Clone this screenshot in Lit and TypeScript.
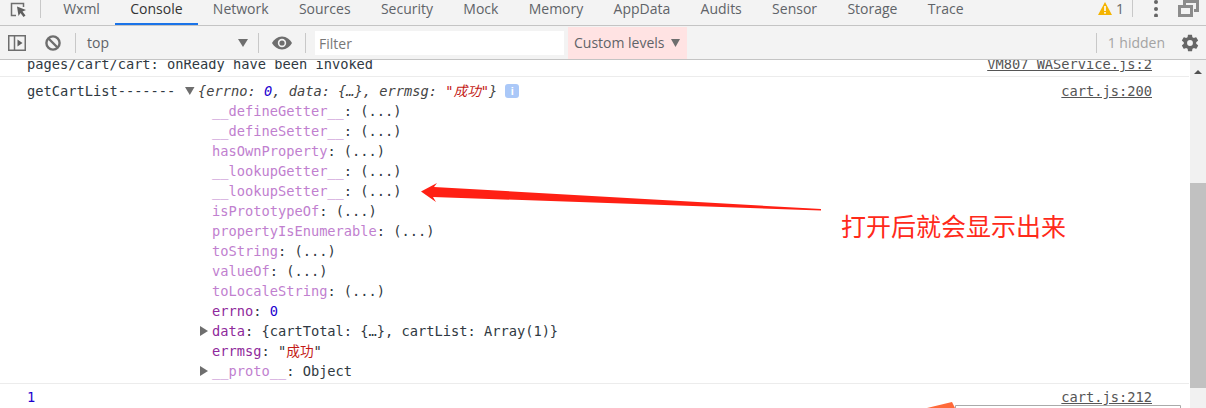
import { LitElement, html, css, svg } from "lit";
import { customElement } from "lit/decorators.js";

const TABS = ["Wxml", "Console", "Network", "Sources", "Security", "Mock", "Memory", "AppData", "Audits", "Sensor", "Storage", "Trace"];
const DIM = [
  ["__defineGetter__", "(...)"],
  ["__defineSetter__", "(...)"],
  ["hasOwnProperty", "(...)"],
  ["__lookupGetter__", "(...)"],
  ["__lookupSetter__", "(...)"],
  ["isPrototypeOf", "(...)"],
  ["propertyIsEnumerable", "(...)"],
  ["toString", "(...)"],
  ["valueOf", "(...)"],
  ["toLocaleString", "(...)"],
];

@customElement("app-root")
export class AppRoot extends LitElement {
  static styles = css`
    :host { display: block; position: relative; width: 1206px; height: 408px; overflow: hidden; background: #fff; font-family: "Open Sans", "Noto Sans", sans-serif; color: #5a5a5a; }
    svg { display: block; flex: none; }
    .bar { display: flex; align-items: center; background: #f3f3f3; box-sizing: border-box; }
    .tabs { height: 26px; border-bottom: 1px solid #c4c4c4; padding-left: 10px; }
    .sep { width: 1px; background: #c8c8c8; flex: none; }
    .tabs .sep.top { align-self: flex-start; margin: 0 7px 0 13px; height: 18px; }
    .tab { height: 25px; line-height: 17px; padding: 0 15.16px; font-size: 14px; color: #5f6368; box-sizing: border-box; white-space: nowrap; }
    .tab.on { color: #333; border-bottom: 2px solid #1a73e8; }
    .spacer { flex: 1; }
    .warn-n { font-size: 14px; line-height: 17px; align-self: flex-start; margin: 0 0 0 4px; color: #666; }
    .tools { height: 34px; border-bottom: 1px solid #c4c4c4; padding-left: 8px; }
    .tools .sep { height: 20px; }
    .ctx { width: 161px; margin-left: 11px; margin-right: 10px; display: flex; align-items: center; font-size: 14px; color: #5f6368; justify-content: space-between; }
    .filter { width: 249px; height: 24px; background: #fff; box-sizing: border-box; padding-left: 4px; font-size: 14px; line-height: 25px; color: #777; margin: 0 4px 0 9px; }
    .levels { width: 119px; height: 32px; background: #ffe3e3; box-sizing: border-box; padding-left: 6px; display: flex; align-items: center; gap: 6px; font-size: 14px; color: #5f6368; }
    .hidden { font-size: 14px; color: #a3a3a3; margin: 0 15px 0 11px; white-space: nowrap; }
    .log { height: 348px; overflow: hidden; font: 13.7px/20px "DejaVu Sans Mono", "Liberation Mono", "Noto Sans CJK SC", monospace; color: #303942; }
    .row { display: flex; box-sizing: border-box; width: 1189px; padding: 0 37px 0 27px; border-bottom: 1px solid #ececec; justify-content: space-between; }
    .row span { white-space: pre; }
    .r1 { margin-top: -6px; height: 23px; }
    .r2 { padding-top: 4px; padding-bottom: 2px; }
    .r3 { padding-top: 3px; border-bottom: 0; }
    .src { color: #555; text-decoration: underline; font-size: 13.7px; }
    .head { display: flex; align-items: center; height: 20px; }
    .label { width: 158px; flex: none; }
    .tri { width: 13px; flex: none; display: flex; align-items: center; }
    .line .tri { width: 12px; }
    .preview { font-style: italic; color: #444; }
    .num { color: #1c00cf; }
    .str { color: #c41a16; }
    .line { display: flex; padding-left: 173px; height: 20px; }
    .line.leaf { padding-left: 185px; }
    .dim { color: #c17fcf; }
    .key { color: #8f2a9c; }
    .info { width: 14px; height: 14px; background: #aac8f8; color: #fff; border-radius: 3px; margin-left: 8px; font: bold 11px/14px "Liberation Sans", sans-serif; text-align: center; flex: none; }
    .scroll { position: absolute; left: 1190px; top: 60px; width: 16px; height: 348px; background: #f1f1f1; }
    .thumb { position: absolute; left: 0; top: 123px; width: 16px; height: 205px; background: #c1c1c1; }
    .up { position: absolute; left: 4px; top: 10px; width: 0; height: 0; border: 4px solid transparent; border-top: 0; border-bottom: 4px solid #505050; }
    .ink { position: absolute; left: 0; top: 0; pointer-events: none; }
    .note { position: absolute; left: 841px; top: 207px; font: 25px/36px "Noto Sans CJK SC", sans-serif; color: #ff2a1a; white-space: nowrap; }
  `;

  private tri(open: boolean) {
    return html`<span class="tri"><svg width="10" height="10" viewBox="0 0 10 10">
      ${open ? svg`<path d="M0 1h9.5L4.8 9z" fill="#6e6e6e"/>` : svg`<path d="M0 0v10l8-5z" fill="#6e6e6e"/>`}
    </svg></span>`;
  }

  render() {
    return html`
      <div class="bar tabs">
        <svg width="17" height="18" viewBox="0 0 17 18" style="align-self:flex-start;margin-top:1px">
          <path d="M6 14.5H1.5V2.5h12V6" fill="none" stroke="#6e6e6e" stroke-width="1.5"/>
          <path d="M7 5.5l9 3.6-3.5 1.500 3 4-2 1.500-3-4L8.500 15z" fill="#5f5f5f"/>
        </svg>
        <span class="sep top"></span>
        ${TABS.map((t) => html`<div class="tab ${t === "Console" ? "on" : ""}">${t}</div>`)}
        <span class="spacer"></span>
        <svg width="14" height="13" viewBox="0 0 14 13" style="align-self:flex-start;margin-top:2px"><path d="M7 0l7 13H0z" fill="#f4b400"/><rect x="6.200" y="4" width="1.600" height="5" fill="#fff"/><rect x="6.200" y="10" width="1.600" height="1.600" fill="#fff"/></svg>
        <span class="warn-n">1</span>
        <span class="sep" style="height:17px;align-self:flex-start;margin:0 20px 0 8px"></span>
        <svg width="6" height="17" viewBox="0 0 6 17" style="align-self:flex-start"><circle cx="3" cy="2" r="2" fill="#666"/><circle cx="3" cy="9" r="2" fill="#666"/><circle cx="3" cy="15.500" r="2" fill="#666"/></svg>
        <svg width="22" height="18" viewBox="0 0 22 18" style="align-self:flex-start;margin:0 6px 0 19px"><path d="M0 5h15v12H0z M3 8v6h9V8z" fill="#8c8c8c" fill-rule="evenodd"/><path d="M5 0h16v12h-5V9h2V3H8v2H5z" fill="#8c8c8c"/></svg>
      </div>
      <div class="bar tools">
        <svg width="18" height="16" viewBox="0 0 18 16"><rect x=".75" y=".75" width="16.500" height="14.500" fill="none" stroke="#6e6e6e" stroke-width="1.500"/><path d="M6.500 1v14" stroke="#6e6e6e" stroke-width="1.500"/><path d="M9.500 4.500v7l5-3.500z" fill="#5f5f5f"/></svg>
        <svg width="16" height="16" viewBox="0 0 16 16" style="margin:0 14px 0 19px"><circle cx="8" cy="8" r="6.600" fill="none" stroke="#6e6e6e" stroke-width="2.400"/><path d="M3.500 3.500l9 9" stroke="#6e6e6e" stroke-width="2.400"/></svg>
        <span class="sep"></span>
        <div class="ctx"><span>top</span><svg width="10" height="8" viewBox="0 0 10 8"><path d="M0 0h10L5 8z" fill="#6e6e6e"/></svg></div>
        <span class="sep"></span>
        <svg width="20" height="14" viewBox="0 0 20 14" style="margin:0 13px"><path d="M10 .5C5.500 .5 2 3.500 0 7c2 3.500 5.500 6.500 10 6.500S18 10.500 20 7C18 3.500 14.500 .5 10 .5z" fill="#6e6e6e"/><circle cx="10" cy="7" r="4.200" fill="#f3f3f3"/><circle cx="10" cy="7" r="2.600" fill="#6e6e6e"/></svg>
        <span class="sep"></span>
        <div class="filter">Filter</div>
        <div class="levels"><span>Custom levels</span><svg width="9" height="8" viewBox="0 0 9 8"><path d="M0 0h9L4.500 8z" fill="#6e6e6e"/></svg></div>
        <span class="spacer"></span>
        <span class="sep"></span>
        <span class="hidden">1 hidden</span>
        <svg width="20" height="20" viewBox="0 0 24 24" style="margin-right:6px"><path fill="#666" d="M19.400 13c.04-.33.06-.66.06-1s-.02-.67-.06-1l2.100-1.650c.2-.15.25-.42.120-.64l-2-3.460c-.12-.22-.39-.3-.61-.22l-2.490 1c-.52-.4-1.080-.73-1.690-.98l-.38-2.650A.49.49 0 0 0 14 2h-4c-.25 0-.46.18-.49.42l-.38 2.650c-.61.25-1.170.59-1.690.98l-2.490-1c-.23-.09-.49 0-.61.22l-2 3.460c-.13.22-.07.49.12.64L4.600 11c-.04.33-.07.67-.07 1s.03.67.07 1l-2.100 1.650c-.19.15-.25.42-.12.64l2 3.460c.12.22.39.3.61.22l2.490-1c.52.4 1.080.73 1.690.98l.38 2.650c.03.24.24.42.49.42h4c.25 0 .46-.18.49-.42l.38-2.650c.61-.25 1.170-.59 1.690-.98l2.490 1c.23.09.49 0 .61-.22l2-3.460c.12-.22.07-.49-.12-.64L19.400 13zM12 15.500a3.500 3.500 0 1 1 0-7 3.500 3.500 0 0 1 0 7z"/></svg>
      </div>
      <div class="log">
        <div class="row r1"><span>pages/cart/cart: onReady have been invoked</span><span class="src">VM807 WAService.js:2</span></div>
        <div class="row r2">
          <div>
            <div class="head">
              <span class="label">getCartList-------</span>
              ${this.tri(true)}<span class="preview">{errno: <span class="num">0</span>, data: {…}, errmsg: <span class="str">"成功"</span>}</span>
              <span class="info">i</span>
            </div>
            ${DIM.map(([k, v]) => html`<div class="line leaf"><span class="dim">${k}</span><span>: ${v}</span></div>`)}
            <div class="line leaf"><span class="key">errno</span><span>: <span class="num">0</span></span></div>
            <div class="line">${this.tri(false)}<span class="key">data</span><span>: {cartTotal: {…}, cartList: Array(1)}</span></div>
            <div class="line leaf"><span class="key">errmsg</span><span>: "<span class="str">成功</span>"</span></div>
            <div class="line">${this.tri(false)}<span class="dim">__proto__</span><span>: Object</span></div>
          </div>
          <span class="src">cart.js:200</span>
        </div>
        <div class="row r3"><span class="num">1</span><span class="src">cart.js:212</span></div>
      </div>
      <div class="scroll"><div class="up"></div><div class="thumb"></div></div>
      <svg class="ink" width="1206" height="408" viewBox="0 0 1206 408">
        <path d="M421 191.500L437 183 434 187 821 209 821 210.500 433 197 436 202z" fill="#ff2014"/>
        <path d="M927 408L952 402 955 408z" fill="#ff6a3a"/>
        <path d="M955.500 408V405.500H1180.500V408" fill="#fff" stroke="#aaa"/>
      </svg>
      <div class="note">打开后就会显示出来</div>
    `;
  }
}
